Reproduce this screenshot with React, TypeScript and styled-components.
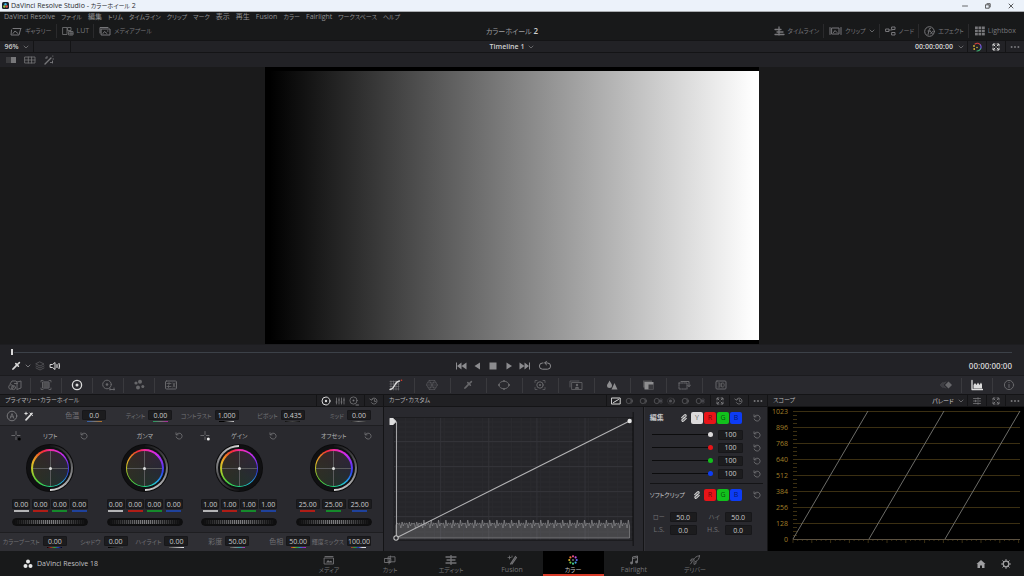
import React from "react";
import styled, { createGlobalStyle, css } from "styled-components";

const Global = createGlobalStyle`
  *, *::before, *::after { box-sizing: border-box; }
  body {
    margin: 0;
    background: #18191a;
    color: #8d8d90;
    font-family: "Open Sans", "Noto Sans CJK JP", sans-serif;
    font-size: 7px;
    line-height: 10px;
    font-feature-settings: "palt";
  }
  button, input, select { font: inherit; font-feature-settings: inherit; color: inherit; }
  h1, h2, h3 { margin: 0; font: inherit; }
`;

const line = "#141416";

const Shell = styled.div`
  display: flex;
  flex-direction: column;
  min-height: 100vh;
`;

/* ---------- icons ---------- */

const Svg = styled.svg`
  display: block;
  flex: none;
  fill: none;
  stroke: currentColor;
  stroke-width: 1;
  stroke-linecap: round;
  stroke-linejoin: round;
`;

type IconProps = { w?: number; h?: number; children: React.ReactNode };
const Icon = ({ w = 12, h = 12, children }: IconProps) => (
  <Svg width={w} height={h} viewBox={`0 0 ${w} ${h}`} aria-hidden="true">
    {children}
  </Svg>
);

const solid = { fill: "currentColor", stroke: "none" };

const Chevron = () => (
  <Icon w={6} h={6}><path d="M1 2l2 2 2-2" strokeWidth=".8" /></Icon>
);
const Reset = () => (
  <Icon w={8} h={8}>
    <path d="M1.6 2.4A3 3 0 1 1 1.2 5" strokeWidth=".8" />
    <path d="M1 .8v2h2" strokeWidth=".8" />
  </Icon>
);
const ResetAll = () => (
  <Icon w={10} h={8}>
    <path d="M2.6 2.2A3 3 0 1 1 2.4 5.6M.8 2l1.6 1.2L4 2M5.4 2.6v1.8h1.4" strokeWidth=".8" />
  </Icon>
);
const Dots = () => (
  <Icon w={10} h={8}>
    <g {...solid}><circle cx="1.6" cy="4" r="1" /><circle cx="5" cy="4" r="1" /><circle cx="8.4" cy="4" r="1" /></g>
  </Icon>
);
const Expand = () => (
  <Icon w={8} h={8}>
    <path d="M1 3V1h2M5 1h2v2M7 5v2H5M3 7H1V5M1.4 1.4l1.6 1.6M6.6 1.4L5 3M6.6 6.6L5 5M1.4 6.6L3 5" strokeWidth="1" />
  </Icon>
);
const Sliders = () => (
  <Icon w={8} h={8}>
    <path d="M.5 1.5h7M.5 4h7M.5 6.5h7M5 .7v1.6M2.5 3.2v1.6M5 5.7v1.6" strokeWidth=".8" />
  </Icon>
);
const Link = () => (
  <Icon w={8} h={8}>
    <path d="M3.4 4.8L5.900 2.300a1 1 0 0 0-1.400-1.400L1.700 3.700M4.600 3.200L2.100 5.700a1 1 0 0 0 1.400 1.400l2.800-2.800" strokeWidth="1.100" />
  </Icon>
);
const WheelIcon = () => (
  <Icon w={10} h={10}>
    <circle cx="5" cy="5" r="4" /><circle cx="5" cy="5" r="1.2" {...solid} />
  </Icon>
);
const Picker = () => (
  <Icon w={10} h={10}>
    <path d="M1 9l.6-1.8 3.6-3.6 1.2 1.2-3.6 3.6z" {...solid} />
    <path d="M4.8 2.6l2.6 2.6M6.2 3.8L8.4 1.6" strokeWidth="1.600" />
  </Icon>
);

/* ---------- window chrome ---------- */

const TitleBar = styled.header`
  display: flex;
  align-items: center;
  height: 12px;
  padding: 0 2px;
  gap: 2px;
  background: #ecf2fa;
  border-bottom: 1px solid #a9acb0;
  color: #2a2c30;
`;
const WindowTitle = styled.h1`
  flex: 1;
  span { font-size: 6px; }
`;
const WindowButtons = styled.div`
  display: flex;
  gap: 11px;
  padding-right: 5px;
`;

const IconButton = styled.button<{ $on?: boolean; $dim?: boolean }>`
  display: flex;
  align-items: center;
  justify-content: center;
  flex: none;
  min-width: 12px;
  padding: 0;
  border: 0;
  background: none;
  color: ${(p) => (p.$on ? "#d8d8d8" : p.$dim ? "#535357" : "#77777a")};
`;

const MenuBar = styled.nav`
  display: flex;
  align-items: center;
  height: 10px;
  padding: 0 4px;
  gap: 6px;
  background: #18191a;
`;
const MenuLink = styled.a<{ $kana?: boolean }>`
  color: #919193;
  text-decoration: none;
  white-space: nowrap;
  font-size: ${(p) => (p.$kana ? 6 : 7)}px;
`;

const TopBar = styled.div`
  display: grid;
  grid-template-columns: 1fr auto 1fr;
  align-items: center;
  height: 18px;
  background: #18191a;
`;
const ToolGroup = styled.div<{ $end?: boolean }>`
  display: flex;
  align-items: center;
  justify-content: ${(p) => (p.$end ? "flex-end" : "flex-start")};
`;
const ToolButton = styled.button<{ $kana?: boolean }>`
  display: flex;
  align-items: center;
  height: 14px;
  gap: 3px;
  padding: 0 4px 0 5px;
  border: 0;
  border-left: 1px solid #2a2a2c;
  background: none;
  color: #77777a;
  font-size: ${(p) => (p.$kana ? 6 : 7)}px;
  white-space: nowrap;
  &:first-child { border-left: 0; padding-left: 10px; }
`;
const RightTools = styled(ToolGroup)`padding-right: 4px;`;
const ProjectTitle = styled.h2`
  color: #9f9fa1;
  font-size: 7px;
  b { color: #d0d0d0; font-size: 8px; font-weight: 600; }
`;

const ViewerHeader = styled.div`
  display: grid;
  grid-template-columns: 1fr auto 1fr;
  align-items: stretch;
  height: 13px;
  background: #222226;
  border: 1px solid ${line};
  border-width: 1px 0;
`;
const HeaderCell = styled.div<{ $w?: number; $line?: boolean; $edge?: boolean }>`
  display: flex;
  align-self: stretch;
  align-items: center;
  justify-content: center;
  gap: 2px;
  min-width: ${(p) => p.$w ?? 19}px;
  ${(p) => p.$line && css`border-left: 1px solid ${line};`}
  ${(p) => p.$edge && css`border-right: 1px solid ${line};`}
`;
const Plain = styled.button<{ $bold?: boolean; $kana?: boolean }>`
  display: flex;
  align-items: center;
  gap: 4px;
  padding: 0;
  border: 0;
  background: none;
  color: #cfcfcf;
  font-size: ${(p) => (p.$kana ? 6 : 7)}px;
  font-weight: ${(p) => (p.$bold ? 600 : 400)};
  white-space: nowrap;
  svg { color: #77777a; }
`;
const Timecode = styled.time<{ $big?: boolean }>`
  color: #d4d4d4;
  font-weight: 600;
  font-size: ${(p) => (p.$big ? 8 : 7)}px;
`;
const ViewerTools = styled.div`
  display: flex;
  align-items: center;
  height: 14px;
  gap: 7px;
  padding: 0 5px;
  background: #222226;
`;

/* ---------- viewer ---------- */

const Viewer = styled.main`
  display: flex;
  flex: 1;
  justify-content: center;
  min-height: 277px;
  background: #1a1a1b;
`;
const Matte = styled.div`
  display: flex;
  width: 48.2%;
  padding: 4px 0;
  background: #000;
`;
const Ramp = styled.div`
  flex: 1;
  background: linear-gradient(90deg, #000 1%, #fff 99%);
`;

const Scrub = styled.input`
  display: block;
  width: 100%;
  height: 8px;
  margin: 3px 0 0;
  padding: 0 12px 0 10px;
  background: none;
  appearance: none;
  &::-webkit-slider-runnable-track { height: 1px; background: #3c4148; }
  &::-webkit-slider-thumb {
    appearance: none;
    width: 4px;
    height: 6px;
    margin-top: -3px;
    border: solid #222226;
    border-width: 0 1px;
    background: #d8d8d8;
  }
`;
const Transport = styled.section`
  height: 31px;
  background: #222226;
  border-top: 1px solid #1d1d20;
`;
const TransportRow = styled.div`
  display: grid;
  grid-template-columns: 1fr auto 1fr;
  align-items: center;
  height: 19px;
  padding: 1px 12px 0 10px;
`;
const TransportGroup = styled.div<{ $gap: number; $end?: boolean }>`
  display: flex;
  align-items: center;
  gap: ${(p) => p.$gap}px;
  justify-content: ${(p) => (p.$end ? "flex-end" : "flex-start")};
`;
const Playback = styled(TransportGroup)`
  padding-right: 12px;
  button { color: #8c8c8f; }
`;

/* ---------- palette bar ---------- */

const PaletteBar = styled.div`
  display: grid;
  grid-template-columns: 37% 1fr auto;
  align-items: stretch;
  height: 19px;
  background: #29292e;
  border-top: 1px solid #1b1b1e;
`;
const PaletteGroup = styled.div`
  display: flex;
  align-items: center;
`;
const PaletteButton = styled.button<{ $w: number; $on?: boolean }>`
  display: flex;
  align-items: center;
  justify-content: center;
  width: ${(p) => p.$w}px;
  height: 15px;
  padding: 0;
  border: 0;
  border-right: 1px solid #3a3a3e;
  background: none;
  color: ${(p) => (p.$on ? "#dcdcdc" : "#67676a")};
  &:last-child { border-right: 0; }
`;

/* ---------- panels ---------- */

const Panels = styled.div`
  display: grid;
  grid-template-columns: minmax(0, 3fr) minmax(0, 3fr) minmax(0, 2fr);
`;
const Panel = styled.section`
  display: flex;
  flex-direction: column;
  min-width: 0;
  background: #29292e;
  border-right: 1px solid ${line};
  &:last-child { border-right: 0; }
`;
const PanelHeader = styled.header`
  display: flex;
  align-items: stretch;
  height: 13px;
  background: #202023;
  border: 1px solid ${line};
  border-width: 1px 0;
`;
const PanelTitle = styled.h3`
  flex: 1;
  padding-left: 5px;
  color: #b4b4b6;
  font-size: 6px;
  line-height: 11px;
  white-space: nowrap;
`;
const Modes = styled(HeaderCell)`
  gap: 2px;
  padding: 0 4px 0 3px;
`;

const ParamRow = styled.div<{ $cols: number }>`
  display: grid;
  grid-template-columns: repeat(${(p) => p.$cols}, minmax(0, 1fr));
  flex: 1;
`;
const PrimaryBar = styled.div`
  display: flex;
  align-items: center;
  height: 18px;
  padding: 0 12px 0 6px;
  background: #2f2f34;
`;
const PrimaryTools = styled.div`
  display: flex;
  align-items: center;
  width: 34px;
  gap: 5px;
`;
const Field = styled.label<{ $kana?: boolean }>`
  display: flex;
  align-items: center;
  justify-content: flex-end;
  gap: 3px;
  color: #717174;
  font-size: ${(p) => (p.$kana ? 6 : 7)}px;
  white-space: nowrap;
`;
const ValueBox = styled.span<{ $bar?: string; $w: number; $thick?: boolean }>`
  display: flex;
  flex-direction: column;
  align-items: center;
  flex: none;
  width: ${(p) => p.$w}px;
  &::after {
    content: "";
    display: ${(p) => (p.$bar ? "block" : "none")};
    flex: none;
    width: 15px;
    height: ${(p) => (p.$thick ? 2 : 1)}px;
    margin-top: 1px;
    background: ${(p) => p.$bar};
  }
`;
const Value = styled.input`
  width: 100%;
  height: 10px;
  padding: 0;
  border: 1px solid #17171a;
  border-radius: 1px;
  background: #1c1c1e;
  color: #cbcbcd;
  font-size: 7px;
  line-height: 8px;
  text-align: center;
`;

const WheelGrid = styled.div`
  display: grid;
  grid-template-columns: repeat(4, 1fr);
  flex: 1;
  padding: 4px 2px 0 3px;
  border: 1px solid #1e1e21;
  border-width: 1px 0;
`;
const WheelCell = styled.div`
  display: flex;
  flex-direction: column;
  align-items: center;
`;
const WheelHead = styled.div`
  display: grid;
  grid-template-columns: 12px 1fr 12px;
  align-items: center;
  width: 80px;
  height: 11px;
  color: #b0b0b2;
  text-align: center;
`;
const WheelLabel = styled.span`
  grid-column: 2;
  font-size: 6px;
`;
const Dial = styled.div`
  display: grid;
  place-items: center;
  width: 48px;
  height: 48px;
  margin: 3px 0 7px;
  border-radius: 50%;
  background: #0b0b0c;
`;
const Arc = styled.div<{ $left?: boolean }>`
  display: grid;
  place-items: center;
  width: 46px;
  height: 46px;
  border-radius: 50%;
  background: conic-gradient(
    from ${(p) => (p.$left ? 180 : 0)}deg,
    #141416 0deg, #3c3c3e 50deg, #8a8a8c 110deg, #d8d8d8 180deg, #101012 180deg
  );
`;
const Well = styled.div`
  display: grid;
  place-items: center;
  width: 42px;
  height: 42px;
  border-radius: 50%;
  background: #101113;
`;
const Hue = styled.div`
  display: grid;
  place-items: center;
  width: 38px;
  height: 38px;
  border-radius: 50%;
  background: conic-gradient(
    #f52ca0 0deg, #d12af0 40deg, #6a34f2 80deg, #2c48f0 105deg, #2492e8 130deg,
    #20cfc8 155deg, #22dc7c 185deg, #55cf38 225deg, #b4cf2c 262deg,
    #e8b428 290deg, #ee6a24 318deg, #f22a3c 338deg, #f52ca0 360deg
  );
`;
const Disc = styled.div`
  display: grid;
  place-items: center;
  width: 35px;
  height: 35px;
  border-radius: 50%;
  background:
    linear-gradient(#5a5a5c, #5a5a5c) center / 1px 100% no-repeat,
    linear-gradient(#5a5a5c, #5a5a5c) center / 100% 1px no-repeat,
    radial-gradient(#2b2b2cee, #2b2b2c99),
    conic-gradient(#4a1638, #3a1a4c 45deg, #201c4c 90deg, #14343c 135deg, #143c24 180deg, #2a3a14 225deg, #3c3614 270deg, #44201a 325deg, #4a1638);
`;
const Puck = styled.span`
  width: 3px;
  height: 3px;
  border-radius: 50%;
  background: #e0e0e0;
`;
const Values = styled.div`
  display: flex;
  justify-content: space-between;
  width: 76px;
`;
const Jog = styled.div`
  width: 76px;
  height: 8px;
  margin-top: 6px;
  border: 1px solid #0e0e0f;
  border-radius: 4px;
  background:
    linear-gradient(90deg, #0e0e0f 2%, transparent 45%, transparent 55%, #0e0e0f 98%),
    linear-gradient(#0e0e0f 1px, transparent 1px, transparent 5px, #0e0e0f 5px),
    repeating-linear-gradient(90deg, #7a7a7c 0 1px, #2e2e30 1px 2px);
`;

/* curves */

const CurveBody = styled.div`
  display: grid;
  grid-template-columns: minmax(0, 259fr) minmax(0, 123fr);
  flex: 1;
`;
const Graph = styled.svg`
  display: block;
  width: 100%;
  height: 144px;
  border-right: 1px solid ${line};
`;
const EditPane = styled.div`
  display: flex;
  flex-direction: column;
  padding: 5px 4px 0 5px;
  border-left: 1px solid #323237;
`;
const EditHead = styled.div`
  display: flex;
  align-items: center;
  height: 12px;
  gap: 1px;
  margin-bottom: 4px;
  color: #c4c4c6;
`;
const EditLabel = styled.span<{ $kana?: boolean }>`
  flex: 1;
  font-size: ${(p) => (p.$kana ? 6 : 7)}px;
  font-weight: ${(p) => (p.$kana ? 400 : 700)};
  white-space: nowrap;
`;
const Channel = styled.button<{ $c: string }>`
  width: 12px;
  height: 12px;
  padding: 0;
  border: 0;
  border-radius: 2px;
  background: ${(p) => p.$c};
  color: #00000099;
  font-size: 7px;
`;
const EndReset = styled(IconButton)`margin-left: 8px;`;
const SliderRow = styled.div`
  display: flex;
  align-items: center;
  height: 13px;
`;
const Slider = styled.input<{ $c: string }>`
  flex: 1;
  min-width: 0;
  height: 6px;
  margin: 0 5px 0 2px;
  background: none;
  appearance: none;
  &::-webkit-slider-runnable-track { height: 1px; background: #0c0c0d; }
  &::-webkit-slider-thumb {
    appearance: none;
    width: 5px;
    height: 5px;
    margin-top: -2px;
    border-radius: 50%;
    background: ${(p) => p.$c};
  }
`;
const Rule = styled.hr`
  width: 100%;
  height: 1px;
  margin: 3px 0 5px;
  border: 0;
  background: #141416;
`;
const ClipGrid = styled.div`
  display: grid;
  grid-template-columns: 47px 55px;
  gap: 3px 0;
  margin-top: 7px;
`;
const ClipField = styled(Field)`gap: 5px;`;

const ScopeGraph = styled.svg`
  display: block;
  width: 100%;
  height: 144px;
  background: #000;
  font-size: 7px;
`;

/* page bar */

const PageBar = styled.footer`
  display: grid;
  grid-template-columns: 1fr auto 1fr;
  align-items: center;
  height: 25px;
  background: #18191a;
`;
const Brand = styled.div`
  display: flex;
  align-items: center;
  gap: 4px;
  padding-left: 23px;
  color: #c2c2c4;
`;
const PageNav = styled.nav`display: flex;`;
const PageLink = styled.a<{ $on?: boolean; $kana?: boolean }>`
  display: flex;
  flex-direction: column;
  align-items: center;
  width: 61px;
  height: 25px;
  padding-top: 4px;
  border-bottom: 2px solid ${(p) => (p.$on ? "#d63a28" : "transparent")};
  background: ${(p) => (p.$on ? "#000" : "none")};
  color: ${(p) => (p.$on ? "#c0c0c2" : "#727275")};
  text-decoration: none;
  font-size: ${(p) => (p.$kana ? 6 : 7)}px;
`;
const PageTools = styled.div`
  display: flex;
  justify-content: flex-end;
  gap: 13px;
  padding-right: 12px;
`;

/* ---------- data ---------- */

const menus = [
  "DaVinci Resolve", "ファイル", "編集", "トリム", "タイムライン", "クリップ", "マーク",
  "表示", "再生", "Fusion", "カラー", "Fairlight", "ワークスペース", "ヘルプ",
];
const hasKana = (s: string) => /[\u30a0-\u30ff]/.test(s);

type ParamData = [name: string, value: string, bar: string];
const topParams: ParamData[] = [
  ["色温", "0.0", "linear-gradient(90deg,#2a5cb0,#777,#b9731f)"],
  ["ティント", "0.00", "linear-gradient(90deg,#1da05a,#777,#b020a0)"],
  ["コントラスト", "1.000", "linear-gradient(90deg,#000 30%,#ccc)"],
  ["ピボット", "0.435", "linear-gradient(90deg,#111,#444,#111)"],
  ["ミッド", "0.00", "linear-gradient(90deg,#222,#777,#333)"],
];
const bottomParams: ParamData[] = [
  ["カラーブースト", "0.00", "linear-gradient(90deg,#000,#a22,#2a3,#23c,#000)"],
  ["シャドウ", "0.00", "linear-gradient(90deg,#000,#444)"],
  ["ハイライト", "0.00", "linear-gradient(90deg,#555,#eee)"],
  ["彩度", "50.00", "linear-gradient(90deg,#555,#888,#2aa,#c2a)"],
  ["色相", "50.00", "linear-gradient(90deg,#c22,#b8a020,#2a3,#28c,#73c,#c2a)"],
  ["輝度ミックス", "100.00", "linear-gradient(90deg,#c22,#2a3,#23c,#ddd,#ddd)"],
];
const bars = ["#b4b4b6", "#b01d16", "#158a2b", "#1f429c"];

const wheels = [
  { name: "リフト", values: ["0.00", "0.00", "0.00", "0.00"], dot: "#000", left: false },
  { name: "ガンマ", values: ["0.00", "0.00", "0.00", "0.00"], dot: "", left: false },
  { name: "ゲイン", values: ["1.00", "1.00", "1.00", "1.00"], dot: "#eee", left: true },
  { name: "オフセット", values: ["25.00", "25.00", "25.00"], dot: "", left: false },
];

const leftPalettes = [
  <Icon w={14} h={12}><circle cx="3" cy="8" r="2.3" /><circle cx="5.5" cy="8.6" r="2" /><path d="M2 5l2-3h4l1 1v7M6.5 4.5h3M9 3l4-1v7l-4 1.5" /></Icon>,
  <Icon><rect x="3" y="3" width="6" height="6" /><path d="M1 3V1.5h2M9 1.5h2V3M11 9v1.5H9M3 10.5H1V9M3 5h6M3 7h6M5 3v6M7 3v6" strokeWidth=".8" /></Icon>,
  <Icon><circle cx="6" cy="6" r="4.6" strokeWidth="1.3" /><circle cx="6" cy="6" r="1.5" {...solid} /></Icon>,
  <Icon w={14}><circle cx="6" cy="5.5" r="4.3" /><circle cx="6" cy="5.5" r="1.3" {...solid} /><path d="M9 10.500h4.500M9 9v2M13 9v2" /></Icon>,
  <Icon><g {...solid}><circle cx="3" cy="4" r="1.6" /><circle cx="7" cy="2.8" r="2" /><circle cx="9.8" cy="7.5" r="1.5" /><circle cx="5" cy="8.5" r="2" /></g></Icon>,
  <Icon w={14}><rect x="1.5" y="2" width="11" height="8" rx="1" /><path d="M3 4.500h4M3 7.500h4M5 3.500v2M4.500 6.500v2M9 4l2 4M11 4L9 8" strokeWidth=".8" /></Icon>,
];
const midPalettes = [
  <Icon w={14}><path d="M1 2.500h9M1 5h9M1 7.500h9M1 10h9M2 2v9M4.500 2v9M7 2v9M9.500 2v9" stroke="#77777a" strokeWidth=".6" /><path d="M1 10.500c5 0 4-8 9.500-8.500" strokeWidth="1.3" /><circle cx="12.5" cy="1.2" r=".8" fill="#e03a2a" stroke="none" /></Icon>,
  <Icon><path d="M3.300 1.500h5.400L11.500 6l-2.800 4.500H3.300L.5 6zM.5 6h11M3.300 1.500l5.400 9M8.700 1.500l-5.400 9M2 3.800h8M2 8.200h8" strokeWidth=".5" /></Icon>,
  <Picker />,
  <Icon w={14}><ellipse cx="7" cy="6" rx="5" ry="3.8" /><g {...solid}><circle cx="7" cy="2" r="1" /><circle cx="7" cy="10" r="1" /><circle cx="2" cy="6" r="1" /><circle cx="12" cy="6" r="1" /></g></Icon>,
  <Icon w={14}><circle cx="7" cy="6" r="3.2" /><circle cx="7" cy="6" r="1" {...solid} /><path d="M2 3.500v-2h2M10 1.500h2v2M12 8.500v2h-2M4 10.500H2v-2" strokeWidth=".7" /></Icon>,
  <Icon w={14}><path d="M1 8V2h9" strokeWidth=".7" /><rect x="3" y="3.5" width="10" height="7" strokeWidth=".8" /><circle cx="8" cy="6" r="1.2" {...solid} /><path d="M5.800 9.800c0-2.800 4.400-2.800 4.400 0z" {...solid} /></Icon>,
  <Icon><path d="M3.500 1.500C5 4 6 5 6 6.500a2.400 2.400 0 0 1-5 0C1 5 2.500 4 3.500 1.500zM8.500 4l3 6.500h-6z" {...solid} fill="#8e8e90" /></Icon>,
  <Icon><rect x="1" y="1.5" width="9" height="7" fill="#505053" stroke="none" /><path d="M2.500 3h9v7.500h-9z" {...solid} fill="#8e8e90" /><path d="M6.500 5.500h5v5h-5z" fill="#3a3a3e" stroke="none" /></Icon>,
  <Icon w={14}><rect x="2" y="4" width="8" height="6" strokeDasharray="1.5 1" /><path d="M4 2.500h8v5M10.500 6l1.500 1.700L13.500 6" /></Icon>,
  <Icon><rect x="1" y="2" width="10" height="8" rx="1" /><path d="M3 4h2v4H3M3.500 6H5M7 4h1.200q1 0 1 2t-1 2H7z" strokeWidth=".8" /></Icon>,
];
const rightPalettes = [
  <Icon w={14}><path d="M9.500 2.500L13 6 9.500 9.500 6 6z" {...solid} /><path d="M4 3.500L1.500 6 4 8.500M6.500 3L3.500 6l3 3" strokeWidth=".7" /></Icon>,
  <Icon><path d="M1 1.500v9h10.500" strokeWidth="1.3" /><path d="M2.500 9.500V6L4 4l1.500 2L7 3.500 8.500 6 10 3.500l1 2v4z" {...solid} /></Icon>,
  <Icon><circle cx="6" cy="6" r="4.6" /><path d="M6 5.500v3M6 3.500v.1" /></Icon>,
];

const curveModes = [
  <Icon w={10} h={8}><rect x=".8" y="1" width="8.4" height="6" /><path d="M2.500 5.500l5-3" /></Icon>,
  ...[0, 1, 2, 3, 4, 5].map((i) => (
    <Icon w={10} h={8}>
      {i === 3
        ? <><circle cx="3.500" cy="4" r="1.600" {...solid} /><circle cx="3.500" cy="4" r="3" strokeWidth=".5" strokeDasharray="1 1" /></>
        : <circle cx="3.800" cy="4" r="2.600" strokeWidth=".9" />}
      {i === 2 || i === 5
        ? <path d="M8 1.500v5M6 4h3.500M6.800 2.500l2.400 3M9.200 2.500l-2.400 3" strokeWidth=".6" />
        : <path d="M6 1.600a2.600 2.600 0 0 1 0 4.800" strokeWidth=".9" />}
    </Icon>
  )),
];

/* noisy, evenly repeating luminance trace along the bottom of the graph */
const histogram = () => {
  const period = [[1, 115], [2.3, 116], [3.6, 115], [4.8, 120], [6, 112], [7.2, 118]];
  let d = "M12 130V117";
  for (let i = 0; i < 32; i++) {
    const x = 12 + i * 7.28;
    for (const [dx, y] of period) {
      d += `L${(x + dx).toFixed(1)} ${y === 112 && i < 3 ? 114 : y}`;
    }
  }
  return d + "V130Z";
};

const scopeLevels = [1023, 896, 768, 640, 512, 384, 256, 128, 0];

const wheelDots = ["#e8508a", "#c050e0", "#5a60f0", "#40a0e8", "#40c890", "#70c840", "#d8b030", "#e87030"];

const pages: [string, React.ReactNode][] = [
  ["メディア", <Icon h={10}><path d="M2 1.500h8M1.500 3h9v6h-9z" strokeWidth=".9" /><path d="M3 7.500l2-2.500 1.500 1.500L8 5.500l1.500 2z" {...solid} /></Icon>],
  ["カット", <Icon h={10}><rect x=".8" y="3.5" width="6" height="4" strokeWidth=".9" /><rect x="4.5" y="1.8" width="6.500" height="5" strokeWidth=".9" /><path d="M6.500 1L5 9" strokeWidth=".9" /></Icon>],
  ["エディット", <Icon h={10}><path d="M1 2h4M7 2h4M2 5h3M7 5h3M1 8h4M7 8h4M6 .5v9" strokeWidth="1.3" /></Icon>],
  ["Fusion", <Icon h={10}><path d="M4.500 9l5-7.500M6 9l4.500-6.500" strokeWidth="1.3" /><path d="M2 2.500h3M3.500 1v3M6 1v1" strokeWidth=".8" /></Icon>],
  ["カラー", (
    <Icon h={10}>
      {wheelDots.map((c, i) => (
        <circle key={c} cx={6 + 3.7 * Math.sin((i * Math.PI) / 4)} cy={5 - 3.7 * Math.cos((i * Math.PI) / 4)} r="1.1" fill={c} stroke="none" />
      ))}
      <circle cx="6" cy="5" r=".8" {...solid} />
    </Icon>
  )],
  ["Fairlight", <Icon h={10}><path d="M4.500 8V2l5-1v6M4.500 3.500l5-1" /><circle cx="3.5" cy="8" r="1.4" {...solid} /><circle cx="8.5" cy="7" r="1.4" {...solid} /></Icon>],
  ["デリバー", <Icon h={10}><path d="M10.500.8c-3 0-5 2-6 4.200l1.800 1.800c2.200-1 4.200-3 4.200-6zM4.500 4H2.500L1.500 6h2.500M7 6.500v2L5 9.500V7M3 7L1.500 9" strokeWidth=".9" /></Icon>],
];

const channels: [string, string][] = [["Y", "#dcdadb"], ["R", "#e81418"], ["G", "#12c01c"], ["B", "#0d3cf5"]];

/* ---------- composed parts ---------- */

const Param = ({ p: [name, value, bar] }: { p: ParamData }) => (
  <Field $kana={hasKana(name)}>
    {name}
    <ValueBox $w={24} $bar={bar}><Value defaultValue={value} /></ValueBox>
  </Field>
);

const Wheel = ({ w }: { w: (typeof wheels)[number] }) => {
  const first = w.values.length === 3 ? 1 : 0;
  return (
    <WheelCell>
      <WheelHead>
        {w.dot && (
          <IconButton aria-label={`${w.name} ポイントを選択`}>
            <Icon w={10} h={10}>
              <path d="M5 .5v3M5 6v2.500M.8 4.500h3M6.300 4.500H9" strokeWidth=".8" />
              <circle cx="8.3" cy="8" r="1.5" fill={w.dot} stroke="none" />
            </Icon>
          </IconButton>
        )}
        <WheelLabel>{w.name}</WheelLabel>
        <IconButton aria-label={`${w.name} リセット`}><Reset /></IconButton>
      </WheelHead>
      <Dial><Arc $left={w.left}><Well><Hue><Disc><Puck /></Disc></Hue></Well></Arc></Dial>
      <Values>
        {w.values.map((v, i) => (
          <ValueBox key={i} $thick $w={first ? 24 : 18} $bar={bars[i + first]}>
            <Value aria-label={`${w.name} ${"YRGB"[i + first]}`} defaultValue={v} />
          </ValueBox>
        ))}
      </Values>
      <Jog />
    </WheelCell>
  );
};

export default function App() {
  return (
    <Shell>
      <Global />
      <TitleBar>
        <Icon w={7} h={7}>
          <rect width="7" height="7" rx="1.5" fill="#17202c" stroke="none" />
          <circle cx="3.5" cy="2.2" r="1.2" fill="#38b4e0" stroke="none" />
          <circle cx="2.3" cy="4.5" r="1.2" fill="#8fc63c" stroke="none" />
          <circle cx="4.7" cy="4.5" r="1.2" fill="#e05040" stroke="none" />
        </Icon>
        <WindowTitle>DaVinci Resolve Studio - <span>カラーホイール</span> 2</WindowTitle>
        <WindowButtons>
          <IconButton aria-label="最小化"><Icon w={6} h={6}><path d="M.5 3h5" stroke="#444" strokeWidth=".8" /></Icon></IconButton>
          <IconButton aria-label="元に戻す"><Icon w={6} h={6}><rect x=".8" y="1.8" width="3.4" height="3.4" stroke="#333" strokeWidth=".8" /><path d="M2 .7h3.200v3.200" stroke="#333" strokeWidth=".8" /></Icon></IconButton>
          <IconButton aria-label="閉じる"><Icon w={6} h={6}><path d="M1 1l4 4M5 1L1 5" stroke="#333" strokeWidth=".8" /></Icon></IconButton>
        </WindowButtons>
      </TitleBar>

      <MenuBar>
        {menus.map((m) => <MenuLink key={m} href="#" $kana={hasKana(m)}>{m}</MenuLink>)}
      </MenuBar>

      <TopBar>
        <ToolGroup>
          <ToolButton $kana>
            <Icon w={12} h={10}><path d="M3 2.500h8M1.500 4L1 9h8l1.500-5.500M3 7.500l2-2.500 3 2.500" /></Icon>ギャラリー
          </ToolButton>
          <ToolButton>
            <Icon w={12} h={10}><path d="M1 1.500h4v7H1zM6 1.500h3v3H6zM7 5.500h4v3.500H7zM9 5.500V9M7 7.200h4" strokeWidth=".8" /></Icon>LUT
          </ToolButton>
          <ToolButton $kana>
            <Icon w={12} h={10}><path d="M1 7V1.500h8" /><rect x="2.5" y="3" width="8.5" height="6" /><path d="M4 7.500l1.500-2L8 7.500M8.500 5h.5" /></Icon>メディアプール
          </ToolButton>
        </ToolGroup>
        <ProjectTitle>カラーホイール <b>2</b></ProjectTitle>
        <RightTools $end>
          <ToolButton $kana>
            <Icon w={11} h={10}><path d="M1 3.500h6M3 6h6M1 8.500h9M5 1v8" strokeWidth="1.3" /></Icon>タイムライン
          </ToolButton>
          <ToolButton $kana>
            <Icon w={13} h={10}><path d="M1 1.500v7M12 1.500v7" /><rect x="3" y="2" width="7" height="6" /><path d="M4.500 6.500L6 4.500l2 2" /></Icon>クリップ<Chevron />
          </ToolButton>
          <ToolButton $kana>
            <Icon w={11} h={10}><rect x="1" y="3" width="3" height="2.5" /><rect x="7" y="1" width="3" height="2.5" /><rect x="7" y="6.5" width="3" height="2.5" /><path d="M4 4h3" strokeWidth=".8" /></Icon>ノード
          </ToolButton>
          <ToolButton $kana>
            <Icon w={11} h={11}><circle cx="5.5" cy="5.5" r="4.8" /><path d="M4 8.500l1.500-6h1M4 5h2.500M6.500 5.500l2 2.500M8.500 5.500l-2 2.500" strokeWidth=".9" /></Icon>エフェクト
          </ToolButton>
          <ToolButton>
            <Icon w={11} h={10}>
              <g {...solid}>
                {[0, 1, 2].map((r) => [0, 1, 2].map((c) => (
                  <rect key={`${r}${c}`} x={1 + c * 3.5} y={0.5 + r * 3.2} width="2.8" height="2.5" />
                )))}
              </g>
            </Icon>
            Lightbox
          </ToolButton>
        </RightTools>
      </TopBar>

      <ViewerHeader>
        <ToolGroup>
          <HeaderCell $w={34} $edge><Plain $bold>96%<Chevron /></Plain></HeaderCell>
          <HeaderCell $w={37} $edge />
        </ToolGroup>
        <Plain $bold>Timeline 1<Chevron /></Plain>
        <ToolGroup $end>
          <HeaderCell $w={52}><Timecode>00:00:00:00</Timecode><IconButton aria-label="タイムコード"><Chevron /></IconButton></HeaderCell>
          <HeaderCell $line>
            <IconButton aria-label="カラー表示">
              <Icon w={10} h={10}>
                <path d="M3 2a4 4 0 0 1 5.500 1" stroke="#d04040" strokeWidth="1.2" /><path d="M8.500 3a4 4 0 0 1 0 4" stroke="#6a58e0" strokeWidth="1.2" /><path d="M8.500 7A4 4 0 0 1 5 9" stroke="#3cae70" strokeWidth="1.2" />
                <g stroke="none" fill="#d8b838"><circle cx="2" cy="4" r=".9" /><circle cx="2.200" cy="7" r=".9" /><circle cx="5" cy="5.500" r=".8" /></g>
              </Icon>
            </IconButton>
          </HeaderCell>
          <HeaderCell $line><IconButton $on aria-label="全画面"><Expand /></IconButton></HeaderCell>
          <HeaderCell $line><IconButton aria-label="オプション"><Dots /></IconButton></HeaderCell>
        </ToolGroup>
      </ViewerHeader>

      <ViewerTools>
        <IconButton aria-label="ワイプ"><Icon w={12} h={8}><rect x="1" y="1" width="5" height="6" fill="#3a3a3d" stroke="none" /><rect x="6" y="1" width="5" height="6" {...solid} /></Icon></IconButton>
        <IconButton aria-label="分割スクリーン"><Icon w={12} h={8}><rect x="1" y="1" width="10" height="6" strokeWidth=".8" /><path d="M1 4h10M4.300 1v6M7.600 1v6" strokeWidth=".8" /></Icon></IconButton>
        <IconButton aria-label="ハイライト"><Icon w={10} h={10}><path d="M1 9l6-6" strokeWidth="1.4" /><path d="M3 1.500v1.500M8.800 1v.2M8.500 6v2M6.500 7.500h1M1.500 3h1M9 4h.5" /></Icon></IconButton>
      </ViewerTools>

      <Viewer><Matte><Ramp /></Matte></Viewer>

      <Transport>
        <Scrub type="range" defaultValue={0} aria-label="再生位置" />
        <TransportRow>
          <TransportGroup $gap={3}>
            <IconButton $on aria-label="スポイト"><Picker /></IconButton>
            <Chevron />
            <IconButton $dim aria-label="レイヤー"><Icon w={10} h={10}><path d="M5 1l4 2-4 2-4-2zM1 5l4 2 4-2M1 7l4 2 4-2" strokeWidth=".9" /></Icon></IconButton>
            <IconButton $on aria-label="ミュート"><Icon w={12} h={10}><path d="M1.500 3.500h2L6 1.500v7L3.500 6.500h-2z" /><path d="M8 3.500v3M10 2.500q1 2.500 0 5" strokeWidth="1.2" /></Icon></IconButton>
          </TransportGroup>
          <Playback $gap={4}>
            <IconButton aria-label="先頭へ"><Icon><path d="M1 2.500h1v7H1zM6.500 2.500v7L2 6zM11.500 2.500v7L6.500 6z" {...solid} /></Icon></IconButton>
            <IconButton aria-label="逆再生"><Icon><path d="M9 2.500v7L3.500 6z" {...solid} /></Icon></IconButton>
            <IconButton aria-label="停止"><Icon><path d="M2.500 2.500h7v7h-7z" {...solid} /></Icon></IconButton>
            <IconButton aria-label="再生"><Icon><path d="M3.500 2.500v7L9 6z" {...solid} /></Icon></IconButton>
            <IconButton aria-label="末尾へ"><Icon><path d="M10 2.500h1v7h-1zM5.500 2.500v7L10 6zM.5 2.500v7l5-3.500z" {...solid} /></Icon></IconButton>
            <IconButton aria-label="ループ"><Icon w={20}><path d="M8 3H7.500a2.800 2.800 0 0 0 0 6.200h5a2.800 2.800 0 0 0 0-6.200H10M11.500 1.200L9.700 3l1.800 1.800" /></Icon></IconButton>
          </Playback>
          <TransportGroup $gap={0} $end><Timecode $big>00:00:00:00</Timecode></TransportGroup>
        </TransportRow>
      </Transport>

      <PaletteBar>
        <PaletteGroup>{leftPalettes.map((ic, i) => <PaletteButton key={i} $w={31} $on={i === 2} aria-label={`パレット ${i + 1}`}>{ic}</PaletteButton>)}</PaletteGroup>
        <PaletteGroup>{midPalettes.map((ic, i) => <PaletteButton key={i} $w={36} $on={i === 0} aria-label={`ツール ${i + 1}`}>{ic}</PaletteButton>)}</PaletteGroup>
        <PaletteGroup>{rightPalettes.map((ic, i) => <PaletteButton key={i} $w={31} $on={i === 1} aria-label={`表示 ${i + 1}`}>{ic}</PaletteButton>)}</PaletteGroup>
      </PaletteBar>

      <Panels>
        <Panel>
          <PanelHeader>
            <PanelTitle>プライマリー・カラーホイール</PanelTitle>
            <Modes $line>
              <IconButton $on aria-label="ホイール"><WheelIcon /></IconButton>
              <IconButton aria-label="バー"><Icon w={10} h={8}><path d="M1.500 1v6M4 1v6M6.500 1v6M9 1v6M1 5h1M3.500 3h1M6 5h1M8.500 3h1" strokeWidth=".8" /></Icon></IconButton>
              <IconButton aria-label="ログ"><Icon w={10} h={10}><circle cx="4.5" cy="4.5" r="3.6" strokeWidth=".8" /><circle cx="4.5" cy="4.5" r="1" {...solid} /><path d="M7 9h2.500" /></Icon></IconButton>
            </Modes>
            <HeaderCell $line><IconButton aria-label="すべてリセット"><ResetAll /></IconButton></HeaderCell>
          </PanelHeader>
          <PrimaryBar>
            <PrimaryTools>
              <IconButton aria-label="自動"><Icon w={12}><circle cx="6" cy="6" r="4.8" /><path d="M4.200 8.200L6 3.500l1.800 4.700M4.800 6.800h2.400" strokeWidth=".8" /></Icon></IconButton>
              <IconButton $on aria-label="ホワイトバランス"><Icon w={10} h={10}><path d="M2 8.800l6-6.500" strokeWidth="1.7" /><path d="M6 2l2.500 2.500M.8 2.500h2.500M2 1.200v2.600" strokeWidth="1" /></Icon></IconButton>
            </PrimaryTools>
            <ParamRow $cols={5}>{topParams.map((p) => <Param key={p[0]} p={p} />)}</ParamRow>
          </PrimaryBar>
          <WheelGrid>{wheels.map((w) => <Wheel key={w.name} w={w} />)}</WheelGrid>
          <PrimaryBar>
            <ParamRow $cols={6}>{bottomParams.map((p) => <Param key={p[0]} p={p} />)}</ParamRow>
          </PrimaryBar>
        </Panel>

        <Panel>
          <PanelHeader>
            <PanelTitle>カーブ・カスタム</PanelTitle>
            <Modes $line>
              {curveModes.map((ic, i) => <IconButton key={i} $on={i === 0} $dim={i > 0} aria-label={`カーブ ${i + 1}`}>{ic}</IconButton>)}
            </Modes>
            <HeaderCell $line><IconButton aria-label="拡大"><Expand /></IconButton></HeaderCell>
            <HeaderCell $line><IconButton aria-label="カーブをリセット"><ResetAll /></IconButton></HeaderCell>
            <HeaderCell $line><IconButton aria-label="オプション"><Dots /></IconButton></HeaderCell>
          </PanelHeader>
          <CurveBody>
            <Graph viewBox="0 0 258 144" preserveAspectRatio="none" fill="none">
              <rect x="10" y="10.5" width="238" height="123" fill="#26262a" stroke="#1c1c1f" />
              <g stroke="#2b2b2f">
                {Array.from({ length: 24 }, (_, i) => <path key={i} d={`M${12 + i * 9.6} 11v122`} />)}
                {Array.from({ length: 24 }, (_, i) => <path key={i} d={`M10 ${15 + i * 5}h238`} />)}
              </g>
              <g stroke="#333338">
                {[56.5, 104.5, 152.5, 200.5].map((x) => <path key={x} d={`M${x} 11v122`} />)}
                {[34.5, 59.5, 84.5, 109.5].map((y) => <path key={y} d={`M10 ${y}h238`} />)}
              </g>
              <path d="M248.500 5v134" stroke="#111113" />
              <g transform="translate(0 1)">
                <path d={histogram()} fill="#ffffff26" stroke="#8a8a8c" strokeWidth=".7" />
                <path d="M12.500 14v116" stroke="#a8a8aa" />
                <path d="M12 130L245 13" stroke="#b4b4b6" />
                <path d="M6 10.500h3l3 3-3 3H6z" fill="#dedede" stroke="#dedede" strokeLinejoin="round" />
                <circle cx="245" cy="13" r="2.2" fill="#e6e6e6" />
                <circle cx="12" cy="130" r="2.2" fill="#29292e" stroke="#c8c8c8" />
              </g>
            </Graph>
            <EditPane>
              <EditHead>
                <EditLabel>編集</EditLabel>
                <IconButton $on aria-label="リンク"><Link /></IconButton>
                {channels.map(([n, c]) => <Channel key={n} $c={c}>{n}</Channel>)}
                <EndReset aria-label="編集をリセット"><Reset /></EndReset>
              </EditHead>
              {channels.map(([n, c]) => (
                <SliderRow key={n}>
                  <Slider type="range" defaultValue={100} $c={c} aria-label={`${n} 強度`} />
                  <ValueBox $w={25}><Value aria-label={`${n} 値`} defaultValue="100" /></ValueBox>
                  <EndReset aria-label={`${n} リセット`}><Reset /></EndReset>
                </SliderRow>
              ))}
              <Rule />
              <EditHead>
                <EditLabel $kana>ソフトクリップ</EditLabel>
                <IconButton $on aria-label="クリップのリンク"><Link /></IconButton>
                {channels.slice(1).map(([n, c]) => <Channel key={n} $c={c}>{n}</Channel>)}
                <EndReset aria-label="クリップをリセット"><Reset /></EndReset>
              </EditHead>
              <ClipGrid>
                {[["ロー", "50.0"], ["ハイ", "50.0"], ["L.S.", "0.0"], ["H.S.", "0.0"]].map(([l, v]) => (
                  <ClipField key={l} $kana={hasKana(l)}>{l}<ValueBox $w={27}><Value defaultValue={v} /></ValueBox></ClipField>
                ))}
              </ClipGrid>
            </EditPane>
          </CurveBody>
        </Panel>

        <Panel>
          <PanelHeader>
            <PanelTitle>スコープ</PanelTitle>
            <HeaderCell $w={38}><Plain $kana>パレード<Chevron /></Plain></HeaderCell>
            <HeaderCell $line><IconButton aria-label="設定"><Sliders /></IconButton></HeaderCell>
            <HeaderCell $line><IconButton aria-label="スコープを拡大"><Expand /></IconButton></HeaderCell>
            <HeaderCell $line><IconButton aria-label="スコープのオプション"><Dots /></IconButton></HeaderCell>
          </PanelHeader>
          <ScopeGraph viewBox="0 0 256 144" preserveAspectRatio="none" fill="none">
            {scopeLevels.map((v, i) => (
              <g key={v}>
                <path d={`M25 ${4.5 + i * 16}h227`} stroke="#3b2f12" />
                <text x="20" y={7 + i * 16} textAnchor="end" fill="#a07f28">{v}</text>
                {i < 8 && [4, 8, 12].map((o) => <path key={o} d={`M25 ${4.5 + i * 16 + o}h4`} stroke="#3b2f12" />)}
              </g>
            ))}
            {Array.from({ length: 49 }, (_, i) => (
              <path key={i} d={`M${25 + i * 4.7} 132v${i % 4 === 0 ? 4 : 2}`} stroke="#3b2f12" />
            ))}
            <path d="M25 132.500h227" stroke="#5a5040" />
            {[25, 101, 177].map((x) => <path key={x} d={`M${x} 132L${x + 75} 4`} stroke="#787874" strokeWidth=".9" />)}
          </ScopeGraph>
        </Panel>
      </Panels>

      <PageBar>
        <Brand>
          <Icon w={10} h={10}><g {...solid} fill="#e8e8e8"><circle cx="5" cy="2.6" r="2" /><circle cx="2.5" cy="7" r="2" /><circle cx="7.5" cy="7" r="2" /></g></Icon>
          DaVinci Resolve 18
        </Brand>
        <PageNav>
          {pages.map(([name, ic]) => <PageLink key={name} href="#" $kana={hasKana(name)} $on={name === "カラー"}>{ic}{name}</PageLink>)}
        </PageNav>
        <PageTools>
          <IconButton aria-label="ホーム"><Icon><path d="M6 2l4.500 4H9.500v4H7V7.500H5V10H2.500V6h-1z" {...solid} fill="#a0a0a2" /></Icon></IconButton>
          <IconButton aria-label="設定"><Icon><circle cx="6" cy="6" r="2.8" stroke="#a0a0a2" strokeWidth="1.3" /><path d="M6 1.500v1.500M6 9v1.500M1.500 6H3M9 6h1.500M2.800 2.800l1 1M8.200 8.200l1 1M2.800 9.200l1-1M8.200 3.800l1-1" stroke="#a0a0a2" /></Icon></IconButton>
        </PageTools>
      </PageBar>
    </Shell>
  );
}
